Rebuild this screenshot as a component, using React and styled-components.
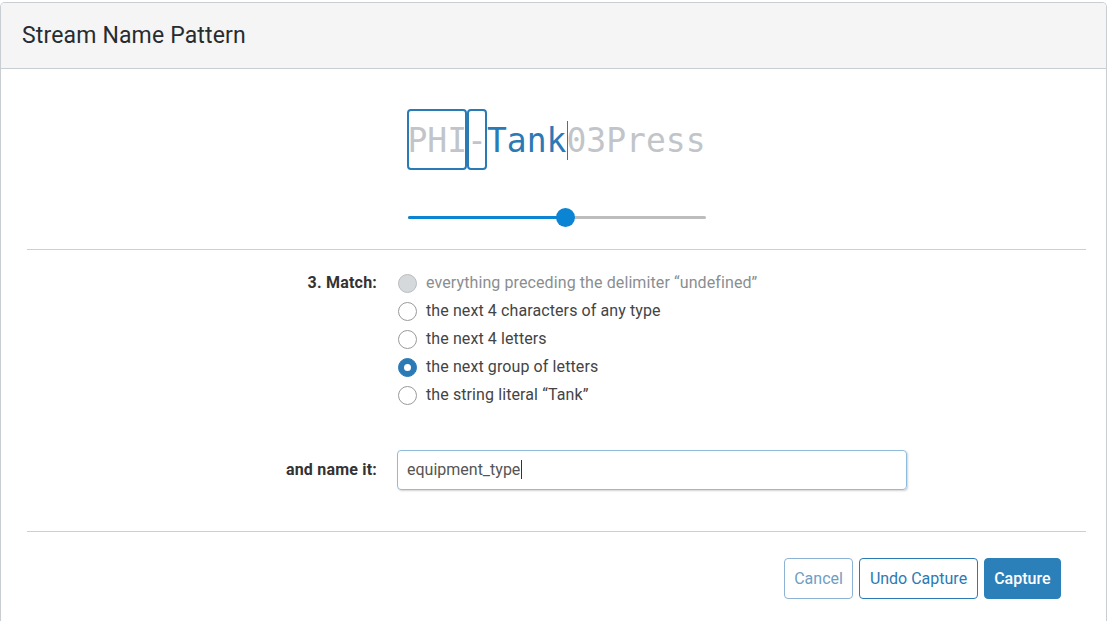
import React from "react";
import styled, { createGlobalStyle } from "styled-components";

const GlobalStyle = createGlobalStyle`
  html, body { margin: 0; padding: 0; background: #fff; }
  body { font-family: Roboto, "Liberation Sans", Arial, sans-serif; }
  * { box-sizing: border-box; }
`;

const Modal = styled.div`
  margin-top: 2px;
  width: 1107px;
  min-height: 619px;
  border: 1px solid #c9ced3;
  border-bottom: none;
  border-radius: 5px 5px 0 0;
  overflow: hidden;
`;

const Header = styled.div`
  height: 66px;
  background: #f5f5f5;
  border-bottom: 1px solid #c9ced3;
  display: flex;
  align-items: center;
  padding-left: 21px;
`;

const Title = styled.h2`
  margin: 0;
  font-size: 23px;
  font-weight: 400;
  letter-spacing: 0.15px;
  color: #272c31;
`;

const Body = styled.div`
  padding: 0 20px 0 26px;
`;

const PatternLine = styled.div`
  margin-top: 52px;
  display: flex;
  justify-content: center;
  font-family: "DejaVu Sans Mono", "Liberation Mono", monospace;
  font-size: 33px;
  line-height: 40px;
  white-space: pre;
`;

const Seg = styled.span`
  position: relative;
  color: ${(p) => (p.$active ? "#2a7ab5" : "#c1c5c9")};
  ${(p) =>
    p.$boxed &&
    `
    &::after {
      content: "";
      position: absolute;
      left: 0;
      right: 0;
      top: -12px;
      bottom: -9px;
      border: 2px solid #2a7ab5;
      border-radius: 4px;
    }
  `}
`;

const Caret = styled.span`
  display: inline-block;
  width: 1px;
  height: 39px;
  background: #2a7ab5;
  vertical-align: -9px;
  margin-right: -1px;
  position: relative;
  left: 1px;
`;

const SliderWrap = styled.div`
  margin: 46px auto 0;
  width: 298px;
  height: 20px;
  position: relative;
  display: flex;
  align-items: center;
`;

const Track = styled.div`
  width: 100%;
  height: 3px;
  background: #bdbdbd;
  border-radius: 2px;
  position: relative;
`;

const Fill = styled.div`
  position: absolute;
  left: 0;
  top: 0;
  height: 100%;
  background: #0b84d3;
  border-radius: 2px;
`;

const Thumb = styled.div`
  position: absolute;
  top: 50%;
  width: 19px;
  height: 19px;
  margin: -9.5px 0 0 -9.5px;
  border-radius: 50%;
  background: #0b84d3;
`;

const Divider = styled.hr`
  margin: ${(p) => p.$mt}px 0 0;
  border: none;
  border-top: 1px solid #cfcfcf;
  height: 0;
`;

const FormRow = styled.div`
  display: grid;
  grid-template-columns: 350px 510px;
  column-gap: 20px;
  margin-top: ${(p) => p.$mt}px;
  align-items: ${(p) => (p.$center ? "center" : "start")};
`;

const Label = styled.div`
  text-align: right;
  font-weight: 700;
  font-size: 16px;
  letter-spacing: 0.2px;
  color: #333;
  line-height: 28px;
`;

const RadioList = styled.div`
  display: flex;
  flex-direction: column;
`;

const RadioRow = styled.label`
  display: flex;
  align-items: center;
  height: 27.8px;
  font-size: 16px;
  letter-spacing: 0.1px;
  color: ${(p) => (p.$disabled ? "#8a8e91" : "#444")};
`;

const Circle = styled.span`
  width: 19px;
  height: 19px;
  margin-left: 1px;
  margin-right: 9px;
  margin-top: 2px;
  border-radius: 50%;
  flex-shrink: 0;
  border: 1px solid ${(p) => (p.$checked ? "#2a7ab5" : p.$disabled ? "#b8bdc1" : "#9a9a9a")};
  background: ${(p) => (p.$checked ? "#2a7ab5" : p.$disabled ? "#d6d9dc" : "#fff")};
  display: flex;
  align-items: center;
  justify-content: center;
  &::after {
    content: "";
    display: ${(p) => (p.$checked ? "block" : "none")};
    width: 7px;
    height: 7px;
    border-radius: 50%;
    background: #fff;
  }
`;

const Input = styled.div`
  width: 510px;
  height: 40px;
  border: 1px solid #8fbcdc;
  border-radius: 4px;
  box-shadow: 1px 1px 2px rgba(0, 0, 0, 0.18);
  padding-left: 9px;
  display: flex;
  align-items: center;
  font-size: 16px;
  color: #555;
`;

const InputCaret = styled.span`
  display: inline-block;
  width: 1px;
  height: 19px;
  background: #333;
  margin-left: 1px;
`;

const Footer = styled.div`
  display: flex;
  justify-content: flex-end;
  gap: 6px;
  margin-top: 26px;
  padding-right: 25px;
`;

const Button = styled.button`
  height: 41px;
  padding: 0 9.5px;
  font-family: Roboto, "Liberation Sans", Arial, sans-serif;
  font-size: 16px;
  font-weight: ${(p) => (p.$primary ? 500 : 400)};
  border-radius: 4px;
  border: 1px solid ${(p) => (p.$primary ? "#2b80b9" : p.$muted ? "#8cb3d3" : "#2a7ab5")};
  background: ${(p) => (p.$primary ? "#2b80b9" : "#fff")};
  color: ${(p) => (p.$primary ? "#fff" : p.$muted ? "#6f9dc3" : "#2a7ab5")};
  cursor: pointer;
`;

const options = [
  { text: "everything preceding the delimiter \u201cundefined\u201d", disabled: true },
  { text: "the next 4 characters of any type" },
  { text: "the next 4 letters" },
  { text: "the next group of letters", checked: true },
  { text: "the string literal \u201cTank\u201d" },
];

export default function App() {
  const progress = 0.53;
  return (
    <>
      <GlobalStyle />
      <Modal>
        <Header>
          <Title>Stream Name Pattern</Title>
        </Header>
        <Body>
          <PatternLine>
            <Seg $boxed>PHI</Seg>
            <Seg $boxed>-</Seg>
            <Seg $active>Tank</Seg>
            <Caret />
            <Seg>03Press</Seg>
          </PatternLine>
          <SliderWrap>
            <Track>
              <Fill style={{ width: `${progress * 100}%` }} />
              <Thumb style={{ left: `${progress * 100}%` }} />
            </Track>
          </SliderWrap>
          <Divider $mt={22} />
          <FormRow $mt={19}>
            <Label>3. Match:</Label>
            <RadioList>
              {options.map((o) => (
                <RadioRow key={o.text} $disabled={o.disabled}>
                  <Circle $checked={o.checked} $disabled={o.disabled} />
                  {o.text}
                </RadioRow>
              ))}
            </RadioList>
          </FormRow>
          <FormRow $mt={42} $center>
            <Label>and name it:</Label>
            <Input>
              equipment_type
              <InputCaret />
            </Input>
          </FormRow>
          <Divider $mt={41} />
          <Footer>
            <Button $muted>Cancel</Button>
            <Button>Undo Capture</Button>
            <Button $primary>Capture</Button>
          </Footer>
        </Body>
      </Modal>
    </>
  );
}
